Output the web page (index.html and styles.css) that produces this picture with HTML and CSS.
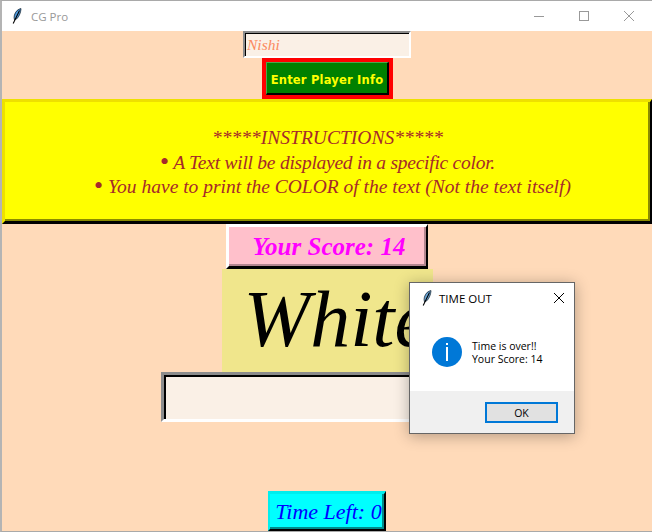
FILE: index.html
```html
<!DOCTYPE html>
<html lang="en">
<head>
<meta charset="utf-8">
<title>CG Pro</title>
<link rel="stylesheet" href="styles.css">
</head>
<body>
<div class="window">
  <header class="titlebar">
    <svg class="feather" viewBox="0 0 10 16" width="10" height="16"><path d="M9 .6C6 1 3.4 3.6 2.4 7.2 2 8.800 2 10.300 2.400 11.600L4.800 10.800C7.200 8.400 8.800 4.400 9 .6Z" fill="#4f9be0" stroke="#10202c" stroke-width=".8"/><path d="M7.500 2.500 1.200 15.400" stroke="#000" stroke-width="1.100" fill="none"/></svg>
    <span class="app-name">CG Pro</span>
    <div class="controls">
      <svg width="12" height="12" viewBox="0 0 12 12"><path d="M1 6.500H11" stroke="#999" fill="none"/></svg>
      <svg width="12" height="12" viewBox="0 0 12 12"><rect x="1.500" y="1.500" width="9" height="9" stroke="#999" fill="none"/></svg>
      <svg width="12" height="12" viewBox="0 0 12 12"><path d="M1 1 11 11M11 1 1 11" stroke="#999" fill="none"/></svg>
    </div>
  </header>
  <main class="content">
    <div class="entry name-entry">Nishi</div>
    <div class="button-ring"><button class="enter-btn">Enter Player Info</button></div>
    <section class="instructions">
      <p>*****INSTRUCTIONS*****</p>
      <p class="tight"><span class="bullet">•</span> A Text will be displayed in a specific color.</p>
      <p class="nudged"><span class="bullet">•</span> You have to print the COLOR of the text (Not the text itself)</p>
    </section>
    <div class="score">Your Score: 14</div>
    <div class="word">White</div>
    <div class="entry answer-entry"></div>
    <div class="timer">Time Left: 0</div>
  </main>
  <div class="dialog">
    <div class="dialog-title">
      <svg class="feather" viewBox="0 0 10 16" width="10" height="16"><path d="M9 .6C6 1 3.400 3.600 2.400 7.200 2 8.800 2 10.300 2.400 11.600L4.800 10.800C7.200 8.400 8.800 4.400 9 .6Z" fill="#6ba6d6" stroke="#1a2a36" stroke-width=".8"/><path d="M7.500 2.500 1.200 15.400" stroke="#000" stroke-width="1.100" fill="none"/></svg>
      <span>TIME OUT</span>
      <svg class="dialog-close" width="12" height="12" viewBox="0 0 12 12"><path d="M1 1 11 11M11 1 1 11" stroke="#000" fill="none"/></svg>
    </div>
    <div class="dialog-body">
      <svg class="info" width="30" height="30" viewBox="0 0 30 30"><circle cx="15" cy="15" r="15" fill="#0078d7"/><rect x="14" y="10" width="2" height="14" fill="#fff"/><rect x="14" y="6" width="2" height="2" fill="#fff"/></svg>
      <p>Time is over!!<br>Your Score: 14</p>
    </div>
    <div class="dialog-footer"><button class="ok">OK</button></div>
  </div>
</div>
</body>
</html>
```
FILE: styles.css
```css
* { box-sizing: border-box; }
html, body { margin: 0; padding: 0; }
p { margin: 0; }
.window {
  position: relative;
  width: 652px;
  height: 532px;
  display: flex;
  flex-direction: column;
  background: #ffdab9;
  border-top: 1px solid #a9a9a9;
  border-left: 2px solid #b4b4b4;
  border-bottom: 1px solid #a9a9a9;
  overflow: hidden;
}
.titlebar {
  height: 30px;
  flex: none;
  background: #fff;
  display: flex;
  align-items: center;
  padding-left: 10px;
  font: 11.500px "Open Sans", sans-serif;
  color: #999;
}
.app-name { margin-left: 9px; }
.controls {
  margin-left: auto;
  display: flex;
  gap: 33px;
  padding-right: 17px;
  margin-top: -1px;
}
.content {
  flex: 1;
  min-height: 0;
  display: flex;
  flex-direction: column;
  align-items: center;
}
.entry {
  background: #faf0e6;
  border-style: solid;
  border-color: #8c8c8c #fff #fff #8c8c8c;
  box-shadow: inset 1px 1px 0 #000;
}
.name-entry {
  width: 168px;
  height: 27px;
  border-width: 2px;
  padding: 3px 0 0 2px;
  font: italic 15.500px "Liberation Serif", serif;
  color: #fa8a60;
}
.button-ring {
  width: 131px;
  height: 41px;
  border: 4px solid #f00;
  background: #008000;
}
.enter-btn {
  display: block;
  width: 100%;
  height: 100%;
  padding: 3px 0 0 1px;
  background: #008000;
  border-style: solid;
  border-width: 1px 2px 2px 1px;
  border-color: #4da64d #000 #000 #4da64d;
  color: #ff0;
  font: bold 11.500px "DejaVu Sans", sans-serif;
  letter-spacing: .2px;
}
.instructions {
  flex: none;
  width: 650px;
  height: 125px;
  background: #ff0;
  border-style: solid;
  border-width: 3px 2px 3px 3px;
  border-color: #eee000 #000 #000 #eee000;
  box-shadow: inset -2px -2px 0 #8b8b00;
  padding-top: 24px;
  text-align: center;
  font: italic 19.500px/24.500px "Liberation Serif", serif;
  color: #a52a2a;
}
.tight { letter-spacing: -.25px; }
.nudged { padding-left: 10px; }
.bullet {
  font-size: 26px;
  line-height: 0;
  font-style: normal;
  vertical-align: -1px;
}
.score {
  width: 202px;
  height: 45px;
  flex: none;
  background: #ffc0cb;
  border-style: solid;
  border-width: 3px 2px 3px 3px;
  border-color: #fff #000 #000 #fff;
  box-shadow: inset -2px -2px 0 #b38690;
  display: flex;
  align-items: center;
  justify-content: center;
  padding-left: 3px;
  font: italic bold 25px "Liberation Serif", serif;
  color: #f0f;
}
.word {
  width: 211px;
  height: 103px;
  flex: none;
  background: #f0e68c;
  padding-left: 22px;
  font: italic 80px/100px "Liberation Serif", serif;
  color: #000;
  white-space: nowrap;
  overflow: hidden;
}
.answer-entry {
  width: 332px;
  height: 50px;
  flex: none;
  border-width: 3px;
  box-shadow: inset 2px 2px 0 #000;
}
.timer {
  margin-top: auto;
  width: 118px;
  height: 40px;
  flex: none;
  background: #0ff;
  border-style: solid;
  border-width: 3px 2px 2px 2px;
  border-color: #00eeee #000 #000 #00eeee;
  box-shadow: inset -2px -2px 0 #008b8b;
  display: flex;
  align-items: center;
  justify-content: center;
  padding-left: 3px;
  white-space: nowrap;
  font: italic 22px "Liberation Serif", serif;
  color: #00f;
}
.dialog {
  position: absolute;
  left: 407px;
  top: 281px;
  width: 166px;
  height: 152px;
  background: #fff;
  border: 1px solid #666;
  box-shadow: 0 2px 14px rgba(0, 0, 0, .3);
  display: flex;
  flex-direction: column;
  font: 10.500px "Open Sans", sans-serif;
  color: #000;
}
.dialog-title {
  height: 30px;
  flex: none;
  display: flex;
  align-items: center;
  padding: 0 9px 0 12px;
  font-size: 11.500px;
}
.dialog-title span { margin-left: 7px; }
.dialog-close { margin-left: auto; }
.dialog-body {
  flex: 1;
  display: flex;
  align-items: center;
  gap: 10px;
  padding: 0 0 0 22px;
}
.dialog-body p { line-height: 13px; position: relative; top: 1px; }
.dialog-footer {
  height: 42px;
  flex: none;
  background: #f0f0f0;
  display: flex;
  justify-content: flex-end;
  align-items: flex-start;
  padding: 11px 16px 0 0;
}
.ok {
  width: 73px;
  height: 21px;
  padding: 0;
  background: #e1e1e1;
  border: 2px solid #0078d7;
  font: 10.500px "Open Sans", sans-serif;
  color: #000;
}
```
